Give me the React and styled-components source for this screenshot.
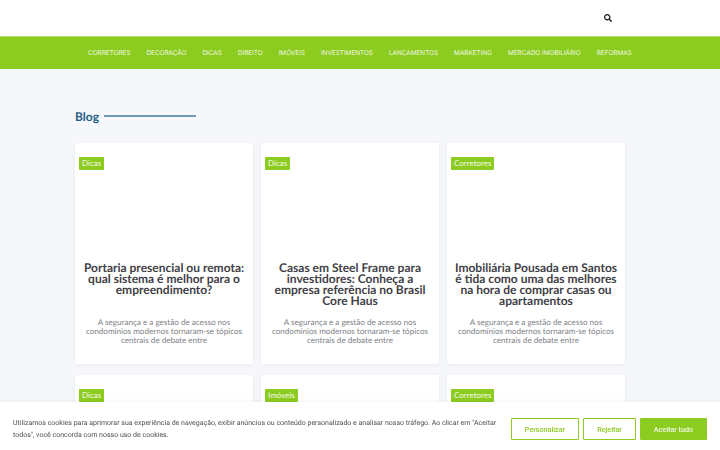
import React from 'react';
import styled, {createGlobalStyle} from 'styled-components';

const GlobalStyle = createGlobalStyle`
    html, body {
        margin: 0;
        padding: 0;
        height: 100%;
        overflow: hidden;
        background: #f5f7fa;
    }
    * {
        box-sizing: border-box;
    }
`;

const Page = styled.div`
    font-family: "Lato", "Liberation Sans", sans-serif;
    text-rendering: geometricPrecision;
    height: 450px;
    overflow: hidden;
`;

const TopBar = styled.header`
    height: 36px;
    background: #fff;
    display: flex;
    justify-content: flex-end;
    align-items: center;
    padding-right: 108px;
`;

const SearchIcon = styled.svg`
    width: 8px;
    height: 8px;
    display: block;
`;

const Nav = styled.nav`
    height: 33px;
    background: #8ccb1f;
    border-top: 1px solid #b5dc70;
    display: flex;
    align-items: center;
    padding-left: 88px;
    gap: 16px;
`;

const NavLink = styled.a`
    font-family: "Inter", "Liberation Sans", sans-serif;
    font-size: 6.4px;
    font-weight: 400;
    line-height: 10px;
    color: #f2f9e4;
    white-space: nowrap;
`;

const Main = styled.main`
    padding: 40px 95px 0 75px;
`;

const SectionHeading = styled.div`
    display: flex;
    align-items: center;
    gap: 5px;
    height: 14px;
    margin-bottom: 20px;
`;

const SectionTitle = styled.h2`
    margin: 0;
    font-size: 12px;
    font-weight: 700;
    color: #245e84;
`;

const SectionRule = styled.span`
    width: 92px;
    height: 2px;
    background: #6f9bb2;
`;

const Grid = styled.div`
    display: grid;
    grid-template-columns: repeat(3, 178px);
    column-gap: 8px;
    row-gap: 11px;
`;

const Card = styled.article`
    height: 221px;
    background: #fff;
    border-radius: 2px;
    box-shadow: 0 1px 5px rgba(30, 50, 80, 0.05);
    padding: 14px 4px 0;
    display: flex;
    flex-direction: column;
`;

const Badge = styled.span`
    align-self: flex-start;
    height: 13px;
    padding: 0 3px;
    background: #8ccb1f;
    border-radius: 1px;
    color: #f4fae8;
    font-size: 8px;
    line-height: 13px;
`;

const CardTitle = styled.h3`
    margin: 92px 0 0;
    height: 52px;
    font-size: 12px;
    line-height: 11px;
    font-weight: 700;
    color: #3f4146;
    text-align: center;
`;

const CardText = styled.p`
    margin: 4px 0 0;
    padding: 0 2px;
    font-size: 8.1px;
    line-height: 9px;
    color: #808287;
    text-align: center;
`;

const CookieBar = styled.aside`
    position: fixed;
    left: 0;
    right: 0;
    bottom: 0;
    height: 48px;
    background: #fff;
    box-shadow: 0 -1px 4px rgba(30, 50, 80, 0.06);
    display: flex;
    align-items: center;
    padding: 6px 13px 0;
    font-family: "Roboto", "Liberation Sans", sans-serif;
`;

const CookieText = styled.p`
    flex: 1;
    margin: 0;
    padding-right: 8px;
    font-size: 7px;
    line-height: 12px;
    color: #4d4f52;
`;

const CookieActions = styled.div`
    display: flex;
    gap: 4px;
`;

const CookieButton = styled.button`
    height: 22px;
    width: ${p => p.$width}px;
    border: 1px solid #8ccb1f;
    border-radius: 1px;
    background: ${p => (p.$primary ? '#8ccb1f' : '#fff')};
    color: ${p => (p.$primary ? '#f4fae8' : '#8ccb1f')};
    font-family: inherit;
    font-size: 7.2px;
    font-weight: 500;
    padding: 0;
`;

const navItems = [
    'CORRETORES', 'DECORAÇÃO', 'DICAS', 'DIREITO', 'IMÓVEIS', 'INVESTIMENTOS',
    'LANÇAMENTOS', 'MARKETING', 'MERCADO IMOBILIÁRIO', 'REFORMAS'
];

const excerpt = 'A segurança e a gestão de acesso nos condomínios modernos tornaram-se tópicos centrais de debate entre';

const posts = [
    {tag: 'Dicas', title: 'Portaria presencial ou remota: qual sistema é melhor para o empreendimento?'},
    {tag: 'Dicas', title: 'Casas em Steel Frame para investidores: Conheça a empresa referência no Brasil Core Haus'},
    {tag: 'Corretores', title: 'Imobiliária Pousada em Santos é tida como uma das melhores na hora de comprar casas ou apartamentos'},
    {tag: 'Dicas', title: ''},
    {tag: 'Imóveis', title: ''},
    {tag: 'Corretores', title: ''}
];

export default function App() {
    return (
        <Page>
            <GlobalStyle/>
            <TopBar>
                <SearchIcon viewBox="0 0 512 512">
                    <path fill="#16181c" d="M505 442.700 405.300 343c-4.500-4.500-10.600-7-17-7H372c27.600-35.300 44-79.700 44-128C416 93.100 322.900 0 208 0S0 93.100 0 208s93.100 208 208 208c48.300 0 92.700-16.400 128-44v16.300c0 6.400 2.500 12.500 7 17l99.700 99.700c9.400 9.400 24.600 9.400 33.900 0l28.300-28.300c9.400-9.400 9.400-24.600.1-34zM208 336c-70.700 0-128-57.200-128-128 0-70.700 57.200-128 128-128 70.700 0 128 57.200 128 128 0 70.700-57.200 128-128 128z"/>
                </SearchIcon>
            </TopBar>
            <Nav>
                {navItems.map(item => <NavLink key={item}>{item}</NavLink>)}
            </Nav>
            <Main>
                <SectionHeading>
                    <SectionTitle>Blog</SectionTitle>
                    <SectionRule/>
                </SectionHeading>
                <Grid>
                    {posts.map((post, i) => (
                        <Card key={i}>
                            <Badge>{post.tag}</Badge>
                            {post.title && <CardTitle>{post.title}</CardTitle>}
                            {post.title && <CardText>{excerpt}</CardText>}
                        </Card>
                    ))}
                </Grid>
            </Main>
            <CookieBar>
                <CookieText>
                    Utilizamos cookies para aprimorar sua experiência de navegação, exibir anúncios ou conteúdo personalizado e analisar nosso tráfego. Ao clicar em "Aceitar todos", você concorda com nosso uso de cookies.
                </CookieText>
                <CookieActions>
                    <CookieButton $width={68}>Personalizar</CookieButton>
                    <CookieButton $width={53}>Rejeitar</CookieButton>
                    <CookieButton $width={67} $primary>Aceitar tudo</CookieButton>
                </CookieActions>
            </CookieBar>
        </Page>
    );
}
